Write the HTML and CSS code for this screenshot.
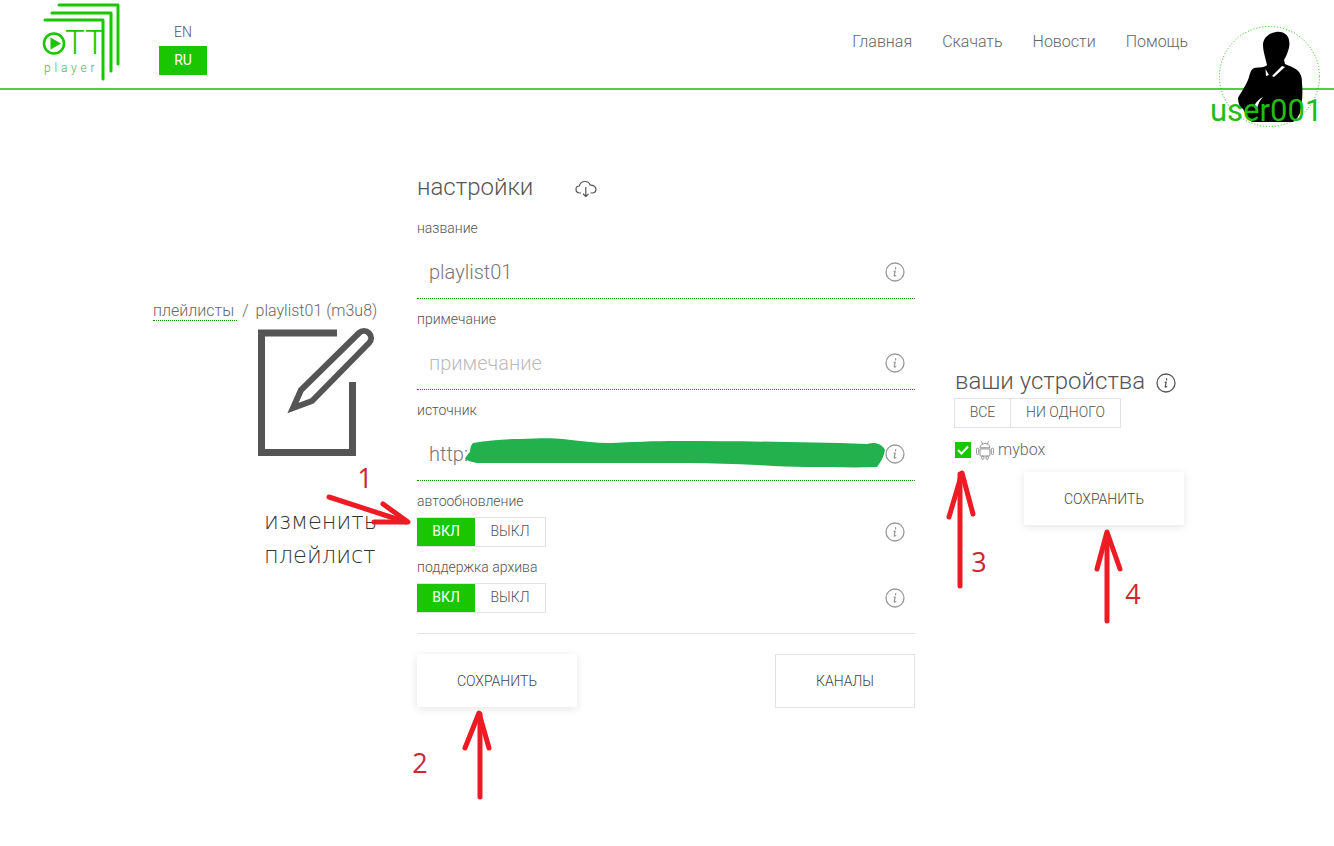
FILE: index.html
```html
<!DOCTYPE html>
<html lang="ru">
<head>
    <meta charset="UTF-8">
    <title>OTT Player - настройки плейлиста</title>
    <link rel="stylesheet" href="styles.css">
</head>
<body>
    <svg width="0" height="0" class="defs">
        <symbol id="info" viewBox="0 0 20 20">
            <circle cx="10" cy="10" r="9" fill="none" stroke="currentColor" stroke-width="1.3"/>
            <path d="M10.6 5.6v1.3M10.2 9l-1.1.4M10.2 9l-1 4.6c-.1.7.5.8 1.6 0" fill="none" stroke="currentColor" stroke-width="1.2" stroke-linecap="round"/>
        </symbol>
    </svg>

    <header class="top">
        <a class="logo" href="#">
            <svg viewBox="40 0 84 84" width="84" height="84">
                <path d="M59 5H118V64M52 13H111V71M45 20H103V79" fill="none" stroke="#1ac600" stroke-width="3" stroke-linecap="round" stroke-linejoin="round"/>
                <circle cx="54" cy="43.500" r="10" fill="none" stroke="#1ac600" stroke-width="2.600"/>
                <path d="M50.500 37.500L61 43.500L50.500 49.500Z" fill="#1ac600"/>
                <text x="65" y="54" class="logo-tt">TT</text>
                <text x="44" y="72" class="logo-player">player</text>
            </svg>
        </a>
        <div class="lang">
            <a href="#" class="lang-item">EN</a>
            <a href="#" class="lang-item lang-active">RU</a>
        </div>
        <nav class="menu">
            <a href="#">Главная</a>
            <a href="#">Скачать</a>
            <a href="#">Новости</a>
            <a href="#">Помощь</a>
        </nav>
        <div class="avatar">
            <svg viewBox="0 0 102 102" width="102" height="102">
                <circle cx="50.500" cy="50.500" r="50" fill="none" stroke="#1ac600" stroke-width="1" stroke-dasharray="1 2"/>
                <path d="M57 6C63 5 69 8 70 14C71 19 70 22 69 25C68 29 66 32 65 34L66 38C70 40 77 42 80 46C83 50 83 54 83 57C84 68 83 78 81 87C79 91 77 94 74 96L33 96C29 93 26 87 24 83C21 81 19 77 19 72C21 68 26 61 29 54C31 49 31 44 35 42C41 41 45 42 48 39L46 31C45 27 44 23 44 19C44 12 50 7 57 6Z" fill="#000"/>
                <path d="M46.500 43L50 49L47 50Z" fill="#fff"/>
                <path d="M53 50L63 40L66 41L55 51Z" fill="#fff"/>
                <path d="M44 71C41 74 39 78 38 83L35 81C36 77 40 73 44 71Z" fill="#fff"/>
            </svg>
            <span class="avatar-name">user001</span>
        </div>
    </header>

    <main class="page">
        <section class="side">
            <div class="crumbs"><a href="#">плейлисты</a><span class="crumb-sep">/</span>playlist01 (m3u8)</div>
            <svg class="edit-icon" viewBox="258 329 115 127" width="115" height="127">
                <path d="M337 333H261.500V452.500H352.500V382" fill="none" stroke="#555" stroke-width="7"/>
                <path d="M293 408L301 390L359 333A7 7 0 0 1 369 343L312 401Z" fill="none" stroke="#555" stroke-width="6"/>
            </svg>
            <div class="edit-caption">изменить<br>плейлист</div>
        </section>

        <section class="settings">
            <h2 class="settings-title">настройки
                <svg class="cloud" viewBox="0 0 22 18" width="22" height="18">
                    <path d="M6 13H5C2.500 13 1 11.300 1 9.300C1 7.300 2.500 6 4.300 6C5 3.300 7.300 1.500 10 1.500C12.500 1.500 14.500 3 15.200 5.200C18.500 5 21 6.800 21 9.300C21 11.500 19.300 13 17 13H15.500M10.800 7V16.500M8 13.800L10.800 16.500L13.500 13.800" fill="none" stroke="#555" stroke-width="1.200" stroke-linejoin="round"/>
                </svg>
            </h2>

            <div class="field">
                <label>название</label>
                <div class="input-row">
                    <span class="input-value">playlist01</span>
                    <svg class="info"><use href="#info"/></svg>
                </div>
            </div>
            <div class="field">
                <label>примечание</label>
                <div class="input-row">
                    <span class="input-value input-empty">примечание</span>
                    <svg class="info"><use href="#info"/></svg>
                </div>
            </div>
            <div class="field">
                <label>источник</label>
                <div class="input-row">
                    <span class="input-value">http:</span>
                    <svg class="info"><use href="#info"/></svg>
                </div>
            </div>

            <div class="field-switch">
                <label>автообновление</label>
                <div class="switch-row">
                    <div class="toggle">
                        <a href="#" class="toggle-on">ВКЛ</a>
                        <a href="#" class="toggle-off">ВЫКЛ</a>
                    </div>
                    <svg class="info"><use href="#info"/></svg>
                </div>
            </div>
            <div class="field-switch">
                <label>поддержка архива</label>
                <div class="switch-row">
                    <div class="toggle">
                        <a href="#" class="toggle-on">ВКЛ</a>
                        <a href="#" class="toggle-off">ВЫКЛ</a>
                    </div>
                    <svg class="info"><use href="#info"/></svg>
                </div>
            </div>

            <div class="actions">
                <button class="btn btn-raised">СОХРАНИТЬ</button>
                <button class="btn btn-outline">КАНАЛЫ</button>
            </div>
        </section>

        <section class="devices">
            <h2 class="devices-title">ваши устройства <svg class="info info-dark"><use href="#info"/></svg></h2>
            <div class="pick">
                <a href="#" class="pick-all">ВСЕ</a>
                <a href="#" class="pick-none">НИ ОДНОГО</a>
            </div>
            <div class="device">
                <span class="check">
                    <svg viewBox="0 0 16 16" width="16" height="16"><path d="M3 8L6.500 11.500L13 4.500" fill="none" stroke="#fff" stroke-width="2"/></svg>
                </span>
                <svg class="android" viewBox="0 0 20 22" width="18" height="20">
                    <path d="M6 1.500L7.500 4.500M14 1.500L12.500 4.500" stroke="#888" stroke-width="1" fill="none"/>
                    <path d="M4.500 8.500C4.500 5.500 7 3.800 10 3.800C13 3.800 15.500 5.500 15.500 8.500Z" fill="none" stroke="#888" stroke-width="1"/>
                    <path d="M4.500 9.800H15.500V16.500C15.500 17.300 15 17.700 14.300 17.700H5.700C5 17.700 4.500 17.300 4.500 16.500Z" fill="none" stroke="#888" stroke-width="1"/>
                    <rect x="0.500" y="9" width="2.500" height="7" rx="1.250" fill="none" stroke="#888" stroke-width="1"/>
                    <rect x="17" y="9" width="2.500" height="7" rx="1.250" fill="none" stroke="#888" stroke-width="1"/>
                    <rect x="6.300" y="17.700" width="2.500" height="3.800" rx="1.250" fill="none" stroke="#888" stroke-width="1"/>
                    <rect x="11.200" y="17.700" width="2.500" height="3.800" rx="1.250" fill="none" stroke="#888" stroke-width="1"/>
                </svg>
                <span class="device-name">mybox</span>
            </div>
            <button class="btn btn-raised device-save">СОХРАНИТЬ</button>
        </section>
    </main>

    <!-- пометки поверх скриншота -->
    <svg class="notes" viewBox="0 0 1334 846" width="1334" height="846">
        <path d="M473 443C490 440 505 439 520 439C540 438 555 438 563 439C580 441 595 443 610 443C630 442 655 441 677 441C740 441 800 442 867 444C870 443 872 443 875 443C880 444 884 447 885 450C884 456 881 462 877 467C855 468 830 467 807 467C790 467 775 466 757 465C735 464 712 463 690 463C665 463 635 463 607 463C560 463 520 463 477 463C472 462 468 461 465 459C466 456 468 454 470 452C470 448 471 445 473 443Z" fill="#22b14c"/>
        <g fill="none" stroke="#ed1c24" stroke-width="5" stroke-linecap="round" stroke-linejoin="round">
            <path d="M329 497L406 522"/>
            <path d="M383 504L408 522L374 522"/>
            <path d="M480 797V714"/>
            <path d="M465 748L479 713L489 748"/>
            <path d="M960 586V474"/>
            <path d="M949 517L962 473L973 514"/>
            <path d="M1107 621V534"/>
            <path d="M1097 569L1107 532L1120 569"/>
        </g>
        <text x="365" y="488" class="note-num">1</text>
        <text x="420" y="773" class="note-num">2</text>
        <text x="979" y="572" class="note-num">3</text>
        <text x="1133" y="604" class="note-num">4</text>
    </svg>
</body>
</html>
```

FILE: styles.css
```css
* {
    box-sizing: border-box;
}

body {
    position: relative;
    margin: 0;
    height: 846px;
    overflow: hidden;
    font-family: Roboto, "Liberation Sans", sans-serif;
    font-weight: 300;
    background-color: white;
    color: #555;
}

a {
    color: inherit;
    text-decoration: none;
}

.defs {
    position: absolute;
}

/* header */
.top {
    position: relative;
    display: flex;
    align-items: flex-start;
    height: 90px;
    padding-left: 40px;
    border-bottom: 2px solid #4ed23c;
}

.logo {
    display: block;
    width: 84px;
    height: 84px;
}

.logo-tt {
    font-family: Roboto, sans-serif;
    font-weight: 300;
    font-size: 33px;
    fill: #1ac600;
}

.logo-player {
    font-family: Roboto, sans-serif;
    font-weight: 300;
    font-size: 12px;
    letter-spacing: 3.800px;
    fill: #52b344;
}

.lang {
    display: flex;
    flex-direction: column;
    align-items: center;
    width: 48px;
    margin-left: 35px;
    padding-top: 22px;
}

.lang-item {
    font-size: 14px;
    line-height: 20px;
}

.lang-active {
    width: 48px;
    height: 29px;
    margin-top: 4px;
    line-height: 29px;
    text-align: center;
    font-weight: 400;
    background: #1ac600;
    color: white;
}

.menu {
    display: flex;
    gap: 30px;
    margin-left: auto;
    margin-right: 146px;
    padding-top: 32px;
    font-size: 16px;
    line-height: 20px;
    color: #666;
}

.avatar {
    position: absolute;
    top: 26px;
    left: 1219px;
    width: 102px;
    height: 102px;
}

.avatar svg {
    display: block;
}

.avatar-name {
    position: absolute;
    top: 67px;
    left: -9px;
    font-size: 31px;
    line-height: 36px;
    font-weight: 400;
    color: #22bd12;
}

/* content */
.page {
    display: flex;
    gap: 40px;
    padding: 82px 0 0 153px;
}

.side {
    width: 224px;
    padding-top: 128px;
}

.crumbs {
    font-size: 16px;
    line-height: 22px;
    white-space: nowrap;
    color: #666;
}

.crumbs a {
    padding-right: 3px;
    border-bottom: 1px dotted #1a8f0a;
}

.crumb-sep {
    margin: 0 7px 0 5px;
}

.edit-icon {
    display: block;
    margin: 7px 0 0 105px;
    overflow: visible;
}

.edit-caption {
    margin: 48px 0 0 111px;
    font-family: "DejaVu Sans Light", "DejaVu Sans", sans-serif;
    font-size: 22.500px;
    line-height: 34px;
    font-weight: 300;
    color: #333;
    white-space: nowrap;
}

.settings {
    width: 498px;
}

.settings-title {
    display: flex;
    align-items: center;
    gap: 42px;
    margin: 0 0 18px;
    font-size: 24px;
    line-height: 30px;
    font-weight: 300;
    color: #555;
}

.cloud {
    margin-top: 3px;
}

label {
    display: block;
    font-size: 14px;
    line-height: 16px;
    color: #555;
}

.field {
    margin-bottom: 12px;
}

.input-row {
    display: flex;
    align-items: center;
    justify-content: space-between;
    height: 63px;
    padding: 10px 10px 0 12px;
    border-bottom: 1px dotted #1a8f0a;
}

.input-value {
    font-size: 20px;
    color: #777;
}

.input-empty {
    color: #bbb;
}

.info {
    width: 20px;
    height: 20px;
    color: #999;
}

.info-dark {
    margin-top: 3px;
    color: #555;
}

.field-switch {
    margin-bottom: 12px;
}

.field-switch label {
    margin-bottom: 8px;
}

.switch-row {
    display: flex;
    align-items: center;
    justify-content: space-between;
    padding-right: 10px;
}

.toggle {
    display: flex;
    width: 129px;
    height: 30px;
    border: 1px solid #e2e2e2;
    font-size: 14px;
    line-height: 27px;
    text-align: center;
}

.toggle-on {
    width: 58px;
    margin-left: -1px;
    background: #1ac600;
    color: white;
    font-weight: 400;
}

.toggle-off {
    flex: 1;
}

.actions {
    display: flex;
    justify-content: space-between;
    align-items: flex-start;
    margin-top: 20px;
    padding-top: 20px;
    border-top: 1px solid #e4e4e4;
}

.btn {
    font-family: inherit;
    font-size: 14px;
    font-weight: 300;
    color: #444;
    background: white;
    cursor: pointer;
}

.btn-raised {
    width: 160px;
    height: 53px;
    border: none;
    box-shadow: 0 2px 8px rgba(0, 0, 0, 0.1);
}

.btn-outline {
    width: 140px;
    height: 54px;
    border: 1px solid #e2e2e2;
}

.devices {
    padding-top: 194px;
}

.devices-title {
    display: flex;
    align-items: center;
    gap: 11px;
    margin: 0 0 2px;
    font-size: 24px;
    line-height: 30px;
    font-weight: 300;
    white-space: nowrap;
    color: #555;
}

.pick {
    display: flex;
    width: 167px;
    height: 30px;
    margin-left: -1px;
    border: 1px solid #e2e2e2;
    font-size: 14px;
    line-height: 27px;
    text-align: center;
}

.pick-all {
    width: 56px;
    border-right: 1px solid #e2e2e2;
}

.pick-none {
    flex: 1;
}

.device {
    display: flex;
    align-items: center;
    gap: 4px;
    height: 19px;
    margin-top: 12px;
    font-size: 16px;
    color: #666;
}

.android {
    margin-left: 1px;
}

.check {
    width: 16px;
    height: 16px;
    background: #1ac600;
}

.check svg {
    display: block;
}

.device-save {
    display: block;
    margin: 13px 0 0 69px;
}

/* overlay with hand-drawn notes */
.notes {
    position: absolute;
    top: 0;
    left: 0;
    pointer-events: none;
}

.note-num {
    font-family: "Open Sans", sans-serif;
    font-size: 27px;
    font-weight: 400;
    text-anchor: middle;
    fill: #cf2730;
}
```
